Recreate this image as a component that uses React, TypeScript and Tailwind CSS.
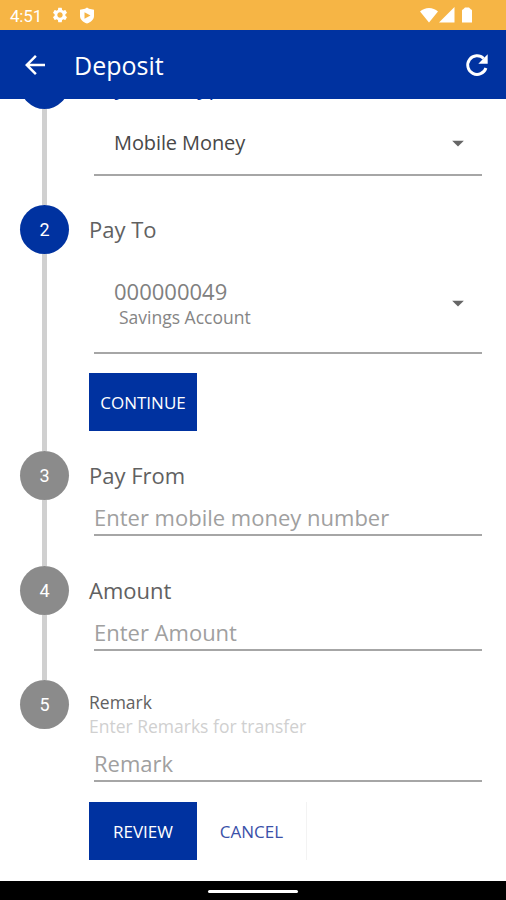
import { useState } from "react"
import type { ReactNode } from "react"
import { MdArrowBack, MdArrowDropDown, MdSettings } from "react-icons/md"

type StepProps = {
    number: number
    active?: boolean
    last?: boolean
    className: string
    children: ReactNode
}

function StatusBar() {
    return (
        <div className="h-[30px] shrink-0 bg-[#f6b545] text-white flex items-center justify-between pl-[10px] pr-[33px]">
            <div className="flex items-center">
                <span className="w-[42px] font-['Roboto'] text-[17px] leading-5 tracking-[-0.2px] mt-0.5">4:51</span>
                <MdSettings className="w-[18px] h-[18px] ml-[-1px]" />
                <svg viewBox="0 0 16 18" className="w-4 h-[18px] ml-[10px] mt-0.5">
                    <path fillRule="evenodd" fill="currentColor" d="M8 .5 10 1.800 15 2.800V9c0 3.500-3 6-7 7.500C4 15 1 12.500 1 9V2.800L6 1.800ZM5.500 5.200v6.600L11.500 8.500Z" />
                </svg>
            </div>
            <div className="flex items-center">
                <svg viewBox="0 0 18 16" className="w-[18px] h-4">
                    <path fill="currentColor" d="M9 15.500 0 4.500C5-.2 13-.2 18 4.500Z" />
                </svg>
                <svg viewBox="0 0 16 16" className="w-4 h-4 ml-[1px]">
                    <path fill="currentColor" d="M0 15.500 15.500 0v15.500Z" />
                </svg>
                <svg viewBox="0 0 10 16" className="w-[10px] h-4 ml-[7px] mr-px">
                    <path fill="currentColor" d="M0 3.500Q0 2.500 1 2.500L3 .5h4L9 2.500Q10 2.500 10 3.500V15.500H0Z" />
                </svg>
            </div>
        </div>
    )
}

function RefreshIcon() {
    return (
        <svg viewBox="0 0 24 24" className="w-8 h-8">
            <path fill="none" stroke="currentColor" strokeWidth="2.200" d="M18.700 14.200A7 7 0 1 1 17 7.100" />
            <path fill="currentColor" d="M20 4v7h-7Z" />
        </svg>
    )
}

function Step({ number, active, last, className, children }: StepProps) {
    return (
        <div className={`flex pl-5 ${className}`}>
            <div className="w-[49px] shrink-0 flex flex-col items-center">
                <div className={`w-[49px] h-[49px] shrink-0 rounded-full flex items-center justify-center text-white font-['Roboto'] text-[18px] ${active ? "bg-[#0032a0]" : "bg-[#8b8b8b]"}`}>
                    {number}
                </div>
                {!last && <div className="w-[5px] flex-1 bg-[#d0d0d0]" />}
            </div>
            <div className="flex-1 pl-5 pr-6 flex flex-col">{children}</div>
        </div>
    )
}

function StepTitle({ children }: { children: ReactNode }) {
    return <div className="h-[49px] shrink-0 flex items-center text-[22px] text-[#616161]">{children}</div>
}

function Field({ placeholder }: { placeholder: string }) {
    const [value, setValue] = useState("")
    return (
        <input
            className="h-9 shrink-0 ml-[5px] border-b-2 border-[#a6a6a6] bg-transparent text-[22px] text-[#616161] placeholder:text-[#a0a0a0] focus:outline-none"
            placeholder={placeholder}
            value={value}
            onChange={(e) => setValue(e.target.value)}
        />
    )
}

export default function App() {
    return (
        <div className="w-[506px] h-[900px] flex flex-col overflow-hidden bg-white font-['Open_Sans',sans-serif]">
            <StatusBar />
            <header className="h-[69px] shrink-0 bg-[#0032a0] text-white flex items-center pl-5 pr-[13px]">
                <MdArrowBack className="w-[30px] h-[30px]" />
                <h1 className="text-[25px] leading-9 flex-1 ml-6">Deposit</h1>
                <RefreshIcon />
            </header>

            <main className="flex-1 overflow-hidden">
                <Step number={1} active className="h-[145px] -mt-[39px]">
                    <StepTitle>
                        <span className="text-[#0032a0] pt-[3px]">Payment Type</span>
                    </StepTitle>
                    <div className="h-[67px] ml-[5px] pl-5 pr-[10px] pt-0.5 flex items-center justify-between border-b-2 border-[#a6a6a6]">
                        <span className="text-[20px] tracking-[-0.1px] text-[#484848]">Mobile Money</span>
                        <MdArrowDropDown className="w-7 h-7 text-[#666666]" />
                    </div>
                </Step>

                {/* Pay To */}
                <Step number={2} active className="h-[246px]">
                    <StepTitle>Pay To</StepTitle>
                    <div className="h-[100px] ml-[5px] pl-5 pr-[10px] flex items-center justify-between border-b-2 border-[#a6a6a6]">
                        <div className="flex flex-col">
                            <span className="text-[22px] leading-7 text-[#808080]">000000049</span>
                            <span className="text-[17.5px] leading-6 text-[#858585] ml-[5px]">Savings Account</span>
                        </div>
                        <MdArrowDropDown className="w-7 h-7 text-[#666666]" />
                    </div>
                    <button className="w-[108px] h-[58px] mt-[19px] pt-0.5 bg-[#0032a0] text-white text-[17px]">CONTINUE</button>
                </Step>

                <Step number={3} className="h-[115px]">
                    <StepTitle>Pay From</StepTitle>
                    <Field placeholder="Enter mobile money number" />
                </Step>

                <Step number={4} className="h-[114px]">
                    <StepTitle>Amount</StepTitle>
                    <Field placeholder="Enter Amount" />
                </Step>

                {/* Remark */}
                <Step number={5} last className="h-[200px]">
                    <div className="pt-[10px] text-[17.5px] leading-6 text-[#616161]">Remark</div>
                    <div className="mb-2 text-[17.5px] leading-6 text-[#d0d0d0]">Enter Remarks for transfer</div>
                    <Field placeholder="Remark" />
                    <div className="mt-5 flex">
                        <button className="w-[108px] h-[58px] pt-0.5 bg-[#0032a0] text-white text-[17px]">REVIEW</button>
                        <button className="w-[110px] h-[58px] pt-0.5 border-r border-[#f3f3f3] text-[#3a50a8] text-[17px]">CANCEL</button>
                    </div>
                </Step>
            </main>

            <div className="h-[19px] shrink-0 bg-black flex items-center justify-center">
                <div className="w-[90px] h-[3px] mt-0.5 bg-white rounded-sm" />
            </div>
        </div>
    )
}
